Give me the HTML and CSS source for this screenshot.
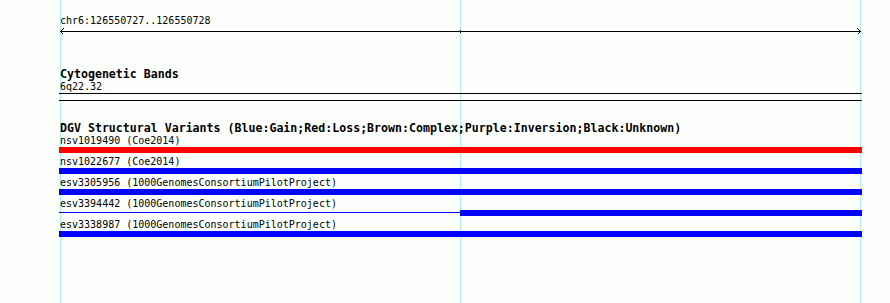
FILE: index.html
```html
<!DOCTYPE html>
<html lang="en">
<head>
  <meta charset="UTF-8">
  <title>DGV Structural Variants</title>
  <link rel="stylesheet" href="styles.css">
</head>
<body>
  <div class="view">
    <div class="gridline g-left"></div>
    <div class="gridline g-mid"></div>
    <div class="gridline g-right"></div>

    <div class="tracks">
      <section class="ruler">
        <div class="label">chr6:126550727..126550728</div>
        <svg class="scale" width="803" height="7" viewBox="0 0 803 7">
          <rect x="1" y="3" width="801" height="1" fill="#000"/>
          <polyline points="4.5,0.5 1.5,3.5 4.5,6.5" fill="none" stroke="#000" stroke-width="1"/>
          <polyline points="798.5,0.5 801.5,3.5 798.5,6.5" fill="none" stroke="#000" stroke-width="1"/>
          <rect x="401" y="2" width="1" height="3" fill="#000"/>
        </svg>
      </section>

      <section class="track cyto">
        <h2>Cytogenetic Bands</h2>
        <div class="label">6q22.32</div>
        <div class="band"></div>
      </section>

      <section class="track dgv">
        <h2>DGV Structural Variants (Blue:Gain;Red:Loss;Brown:Complex;Purple:Inversion;Black:Unknown)</h2>
        <div class="feature">
          <div class="label">nsv1019490 (Coe2014)</div>
          <div class="bar loss"></div>
        </div>
        <div class="feature">
          <div class="label">nsv1022677 (Coe2014)</div>
          <div class="bar gain"></div>
        </div>
        <div class="feature">
          <div class="label">esv3305956 (1000GenomesConsortiumPilotProject)</div>
          <div class="bar gain"></div>
        </div>
        <div class="feature">
          <div class="label">esv3394442 (1000GenomesConsortiumPilotProject)</div>
          <div class="bar split">
            <span class="thin"></span>
            <span class="thick"></span>
          </div>
        </div>
        <div class="feature">
          <div class="label">esv3338987 (1000GenomesConsortiumPilotProject)</div>
          <div class="bar gain"></div>
        </div>
      </section>
    </div>
  </div>
</body>
</html>
```

FILE: styles.css
```css
body {
  margin: 0;
  padding: 0;
  background-color: #fdfffd;
  color: #000;
  font-family: 'DejaVu Sans Mono', 'Liberation Mono', monospace;
}
.view {
  position: relative;
  width: 890px;
  height: 303px;
  overflow: hidden;
}
.gridline {
  position: absolute;
  top: 0;
  bottom: 0;
  width: 1px;
  background-color: #afeeee;
}
.g-left {
  left: 60px;
}
.g-mid {
  left: 460px;
}
.g-right {
  left: 860px;
}
.tracks {
  position: relative;
  padding-left: 59px;
  width: 803px;
}
.label {
  font-size: 10px;
  line-height: 11px;
  padding-top: 1px;
  padding-left: 1px;
  white-space: nowrap;
}
h2 {
  margin: 0;
  padding-left: 1px;
  font-size: 11.6px;
  line-height: 11px;
  font-weight: bold;
  white-space: nowrap;
}
.ruler {
  padding-top: 14px;
}
.scale {
  display: block;
  margin-top: 2px;
  shape-rendering: crispEdges;
}
.cyto {
  margin-top: 34px;
}
.band {
  margin-top: 1px;
  height: 6px;
  border-top: 1px solid #000;
  border-bottom: 1px solid #000;
}
.dgv {
  margin-top: 22px;
}
.feature {
  margin-bottom: 2px;
}
.bar {
  margin-top: 1px;
  height: 6px;
}
.loss {
  background-color: #ff0000;
}
.gain {
  background-color: #0000ff;
}
.split {
  display: flex;
}
.split .thin {
  width: 401px;
  height: 1px;
  margin-top: 2px;
  background-color: #0000ff;
}
.split .thick {
  flex: 1;
  height: 6px;
  background-color: #0000ff;
}
```
